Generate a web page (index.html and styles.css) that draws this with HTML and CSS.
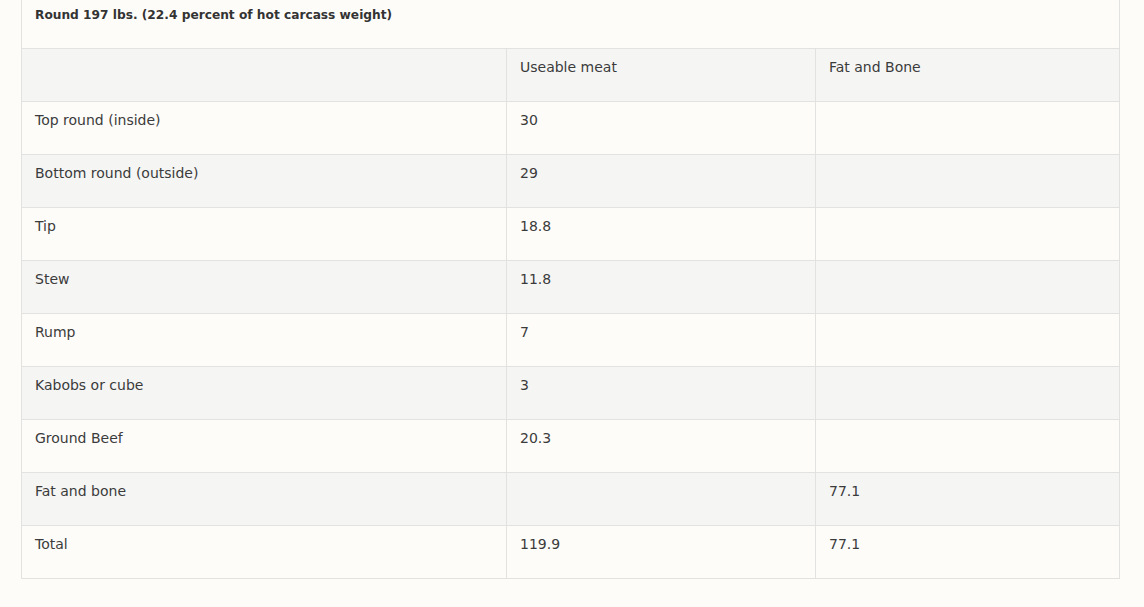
FILE: index.html
```html
<!DOCTYPE html>
<html lang="en">
<head>
<meta charset="utf-8">
<title>Round yield</title>
<link rel="stylesheet" href="styles.css">
</head>
<body>
<div class="wrap">
<table class="yield">
<colgroup>
<col class="c1"><col class="c2"><col class="c3">
</colgroup>
<thead>
<tr class="caption-row"><th colspan="3">Round 197 lbs. (22.4 percent of hot carcass weight)</th></tr>
<tr class="head-row"><td></td><td>Useable meat</td><td>Fat and Bone</td></tr>
</thead>
<tbody>
<tr><td>Top round (inside)</td><td>30</td><td></td></tr>
<tr><td>Bottom round (outside)</td><td>29</td><td></td></tr>
<tr><td>Tip</td><td>18.8</td><td></td></tr>
<tr><td>Stew</td><td>11.8</td><td></td></tr>
<tr><td>Rump</td><td>7</td><td></td></tr>
<tr><td>Kabobs or cube</td><td>3</td><td></td></tr>
<tr><td>Ground Beef</td><td>20.3</td><td></td></tr>
<tr><td>Fat and bone</td><td></td><td>77.1</td></tr>
<tr><td>Total</td><td>119.9</td><td>77.1</td></tr>
</tbody>
</table>
</div>
</body>
</html>
```
FILE: styles.css
```css
html, body {
  margin: 0;
  background: #fdfcf9;
}
body {
  font-family: "DejaVu Sans", "Liberation Sans", sans-serif;
  font-size: 14px;
  color: #3b3b3b;
}
.wrap {
  padding: 0 24px 0 21px;
}
.yield {
  width: 100%;
  border-collapse: collapse;
  table-layout: fixed;
}
.c1 { width: 485px; }
.c2 { width: 309px; }
.c3 { width: auto; }
.yield td, .yield th {
  border: 1px solid #e2e2e0;
  text-align: left;
  vertical-align: top;
  line-height: 20px;
  padding: 8px 13px 24px;
  height: 20px;
}
.caption-row th {
  border-top: none;
  font-weight: bold;
  font-size: 12.2px;
  color: #333;
  padding: 5px 13px 23px;
}
.head-row td { background: #f5f5f4; }
.yield tbody tr:nth-child(even) td { background: #f5f5f4; }
```
